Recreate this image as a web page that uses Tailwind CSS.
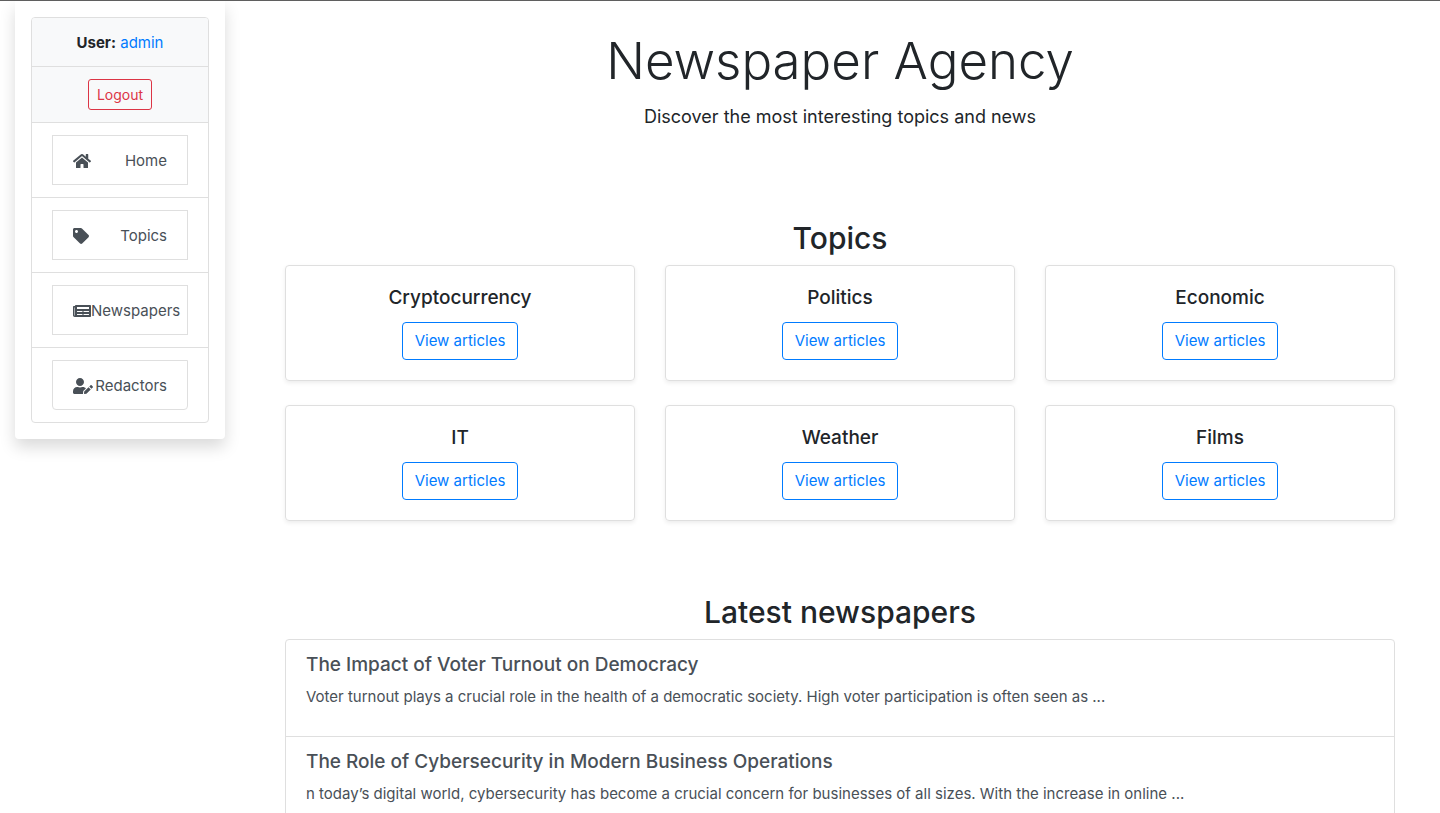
<!DOCTYPE html>
<html lang="en">
<head>
<meta charset="utf-8">
<meta name="viewport" content="width=device-width, initial-scale=1">
<title>Newspaper Agency</title>
<script src="https://cdn.jsdelivr.net/npm/@tailwindcss/browser@4"></script>
</head>
<body class="h-screen overflow-hidden border-t border-[#5f5f5f] bg-white font-['Inter','Liberation_Sans',sans-serif] text-[15px] leading-6 text-[#212529]">
<div class="flex items-start">
  <aside class="ml-[15px] w-[210px] shrink-0 rounded-b bg-white p-4 shadow-[0_8px_16px_rgba(0,0,0,0.15)]">
    <ul class="divide-y divide-[#dfdfdf] overflow-hidden rounded border border-[#dfdfdf] text-center text-[#495057]">
      <li class="bg-[#f8f9fa] pt-[13px] pb-[11px] text-[#212529]"><strong class="font-bold">User:</strong> <a href="#" class="text-[#007bff]">admin</a></li>
      <li class="flex justify-center bg-[#f8f9fa] py-3"><button type="button" class="rounded-[3px] border border-[#dc3545] px-2 py-1 text-sm leading-[21px] text-[#dc3545]">Logout</button></li>
      <li class="px-5 py-3"><a href="#" class="flex items-center justify-between border border-[#dfdfdf] px-5 pt-[13px] pb-[11px]">
        <svg class="h-4 w-[18px] shrink-0" viewBox="0 0 576 512" fill="currentColor" aria-hidden="true"><path d="M280.37 148.26L96 300.11V464a16 16 0 0 0 16 16l112.06-.29a16 16 0 0 0 15.92-16V368a16 16 0 0 1 16-16h64a16 16 0 0 1 16 16v95.64a16 16 0 0 0 16 16.05L464 480a16 16 0 0 0 16-16V300L295.67 148.26a12.19 12.19 0 0 0-15.3 0zM571.6 251.47L488 182.56V44.05a12 12 0 0 0-12-12h-56a12 12 0 0 0-12 12v72.61L318.47 43a48 48 0 0 0-61 0L4.34 251.47a12 12 0 0 0-1.6 16.9l25.5 31A12 12 0 0 0 45.15 301l235.22-193.74a12.19 12.19 0 0 1 15.3 0L530.9 301a12 12 0 0 0 16.9-1.6l25.5-31a12 12 0 0 0-1.7-16.93z"/></svg>
        <span>Home</span></a></li>
      <li class="px-5 py-3"><a href="#" class="flex items-center justify-between border border-[#dfdfdf] px-5 pt-[13px] pb-[11px]">
        <svg class="h-4 w-4 shrink-0" viewBox="0 0 512 512" fill="currentColor" aria-hidden="true"><path d="M0 252.118V48C0 21.49 21.49 0 48 0h204.118a48 48 0 0 1 33.941 14.059l211.882 211.882c18.745 18.745 18.745 49.137 0 67.882L293.823 497.941c-18.745 18.745-49.137 18.745-67.882 0L14.059 286.059A48 48 0 0 1 0 252.118zM112 64c-26.51 0-48 21.49-48 48s21.49 48 48 48 48-21.49 48-48-21.49-48-48-48z"/></svg>
        <span>Topics</span></a></li>
      <li class="px-5 py-3"><a href="#" class="flex items-center justify-between border border-[#dfdfdf] px-5 pt-[13px] pb-[11px]">
        <svg class="h-4 w-[18px] shrink-0" viewBox="0 0 576 512" fill="currentColor" aria-hidden="true"><path d="M552 64H88c-13.255 0-24 10.745-24 24v8H24c-13.255 0-24 10.745-24 24v272c0 30.928 25.072 56 56 56h496c13.255 0 24-10.745 24-24V88c0-13.255-10.745-24-24-24zM56 400a8 8 0 0 1-8-8V144h16v248a8 8 0 0 1-8 8zm236-16H140c-6.627 0-12-5.373-12-12v-8c0-6.627 5.373-12 12-12h152c6.627 0 12 5.373 12 12v8c0 6.627-5.373 12-12 12zm208 0H348c-6.627 0-12-5.373-12-12v-8c0-6.627 5.373-12 12-12h152c6.627 0 12 5.373 12 12v8c0 6.627-5.373 12-12 12zm-208-96H140c-6.627 0-12-5.373-12-12v-8c0-6.627 5.373-12 12-12h152c6.627 0 12 5.373 12 12v8c0 6.627-5.373 12-12 12zm208 0H348c-6.627 0-12-5.373-12-12v-8c0-6.627 5.373-12 12-12h152c6.627 0 12 5.373 12 12v8c0 6.627-5.373 12-12 12zm0-96H140c-6.627 0-12-5.373-12-12v-40c0-6.627 5.373-12 12-12h360c6.627 0 12 5.373 12 12v40c0 6.627-5.373 12-12 12z"/></svg>
        <span>Newspapers</span></a></li>
      <li class="px-5 py-3"><a href="#" class="flex items-center justify-between rounded-b border border-[#dfdfdf] px-5 pt-[13px] pb-[11px]">
        <svg class="h-4 w-5 shrink-0" viewBox="0 0 640 512" fill="currentColor" aria-hidden="true"><path d="M224 256c70.7 0 128-57.3 128-128S294.7 0 224 0 96 57.3 96 128s57.3 128 128 128zm89.6 32h-16.7c-22.2 10.2-46.9 16-72.9 16s-50.6-5.8-72.9-16h-16.7C60.2 288 0 348.2 0 422.4V464c0 26.5 21.5 48 48 48h274.9c-2.4-6.8-3.4-14-2.6-21.3l6.8-60.9 1.2-11.1 7.9-7.9 77.3-77.3c-24.5-27.7-60-45.5-99.9-45.5zm45.3 145.3l-6.8 61c-1.1 10.2 7.5 18.8 17.6 17.6l60.9-6.8 137.9-137.9-71.7-71.7-137.9 137.8zM633 268.9L595.1 231c-9.3-9.3-24.5-9.3-33.8 0l-37.8 37.8-4.1 4.1 71.8 71.7 41.8-41.8c9.3-9.4 9.3-24.5 0-33.9z"/></svg>
        <span>Redactors</span></a></li>
    </ul>
  </aside>
  <main class="min-w-0 flex-1 pr-[45px] pl-[60px] text-center">
    <header class="pt-[26px]">
      <h1 class="text-[51px] leading-[67px] font-light">Newspaper Agency</h1>
      <p class="mt-2 text-lg leading-[30px]">Discover the most interesting topics and news</p>
    </header>
    <section class="pt-[87px]">
      <h2 class="text-[30px] leading-[38px] font-medium">Topics</h2>
      <div class="mt-2 grid grid-cols-3 gap-x-[30px] gap-y-6">
        <article class="rounded border border-[#dfdfdf] p-5 shadow-[0_2px_4px_rgba(0,0,0,0.075)]"><h3 class="mb-3 text-[19px] leading-6 font-medium">Cryptocurrency</h3><a href="#" class="inline-block rounded border border-[#007bff] px-3 py-[6px] align-top text-[#007bff]">View articles</a></article>
        <article class="rounded border border-[#dfdfdf] p-5 shadow-[0_2px_4px_rgba(0,0,0,0.075)]"><h3 class="mb-3 text-[19px] leading-6 font-medium">Politics</h3><a href="#" class="inline-block rounded border border-[#007bff] px-3 py-[6px] align-top text-[#007bff]">View articles</a></article>
        <article class="rounded border border-[#dfdfdf] p-5 shadow-[0_2px_4px_rgba(0,0,0,0.075)]"><h3 class="mb-3 text-[19px] leading-6 font-medium">Economic</h3><a href="#" class="inline-block rounded border border-[#007bff] px-3 py-[6px] align-top text-[#007bff]">View articles</a></article>
        <article class="rounded border border-[#dfdfdf] p-5 shadow-[0_2px_4px_rgba(0,0,0,0.075)]"><h3 class="mb-3 text-[19px] leading-6 font-medium">IT</h3><a href="#" class="inline-block rounded border border-[#007bff] px-3 py-[6px] align-top text-[#007bff]">View articles</a></article>
        <article class="rounded border border-[#dfdfdf] p-5 shadow-[0_2px_4px_rgba(0,0,0,0.075)]"><h3 class="mb-3 text-[19px] leading-6 font-medium">Weather</h3><a href="#" class="inline-block rounded border border-[#007bff] px-3 py-[6px] align-top text-[#007bff]">View articles</a></article>
        <article class="rounded border border-[#dfdfdf] p-5 shadow-[0_2px_4px_rgba(0,0,0,0.075)]"><h3 class="mb-3 text-[19px] leading-6 font-medium">Films</h3><a href="#" class="inline-block rounded border border-[#007bff] px-3 py-[6px] align-top text-[#007bff]">View articles</a></article>
      </div>
    </section>
    <section class="pt-[72px]">
      <h2 class="text-[30px] leading-[38px] font-medium">Latest newspapers</h2>
      <div class="mt-2 divide-y divide-[#dfdfdf] rounded border border-[#dfdfdf] text-left text-[#495057]">
        <a href="#" class="block px-5 pt-[13px] pb-[27px]"><h3 class="mb-2 text-[19px] leading-6 font-medium">The Impact of Voter Turnout on Democracy</h3><p>Voter turnout plays a crucial role in the health of a democratic society. High voter participation is often seen as ...</p></a>
        <a href="#" class="block px-5 pt-[13px] pb-[27px]"><h3 class="mb-2 text-[19px] leading-6 font-medium">The Role of Cybersecurity in Modern Business Operations</h3><p>n today’s digital world, cybersecurity has become a crucial concern for businesses of all sizes. With the increase in online ...</p></a>
      </div>
    </section>
  </main>
</div>
</body>
</html>
